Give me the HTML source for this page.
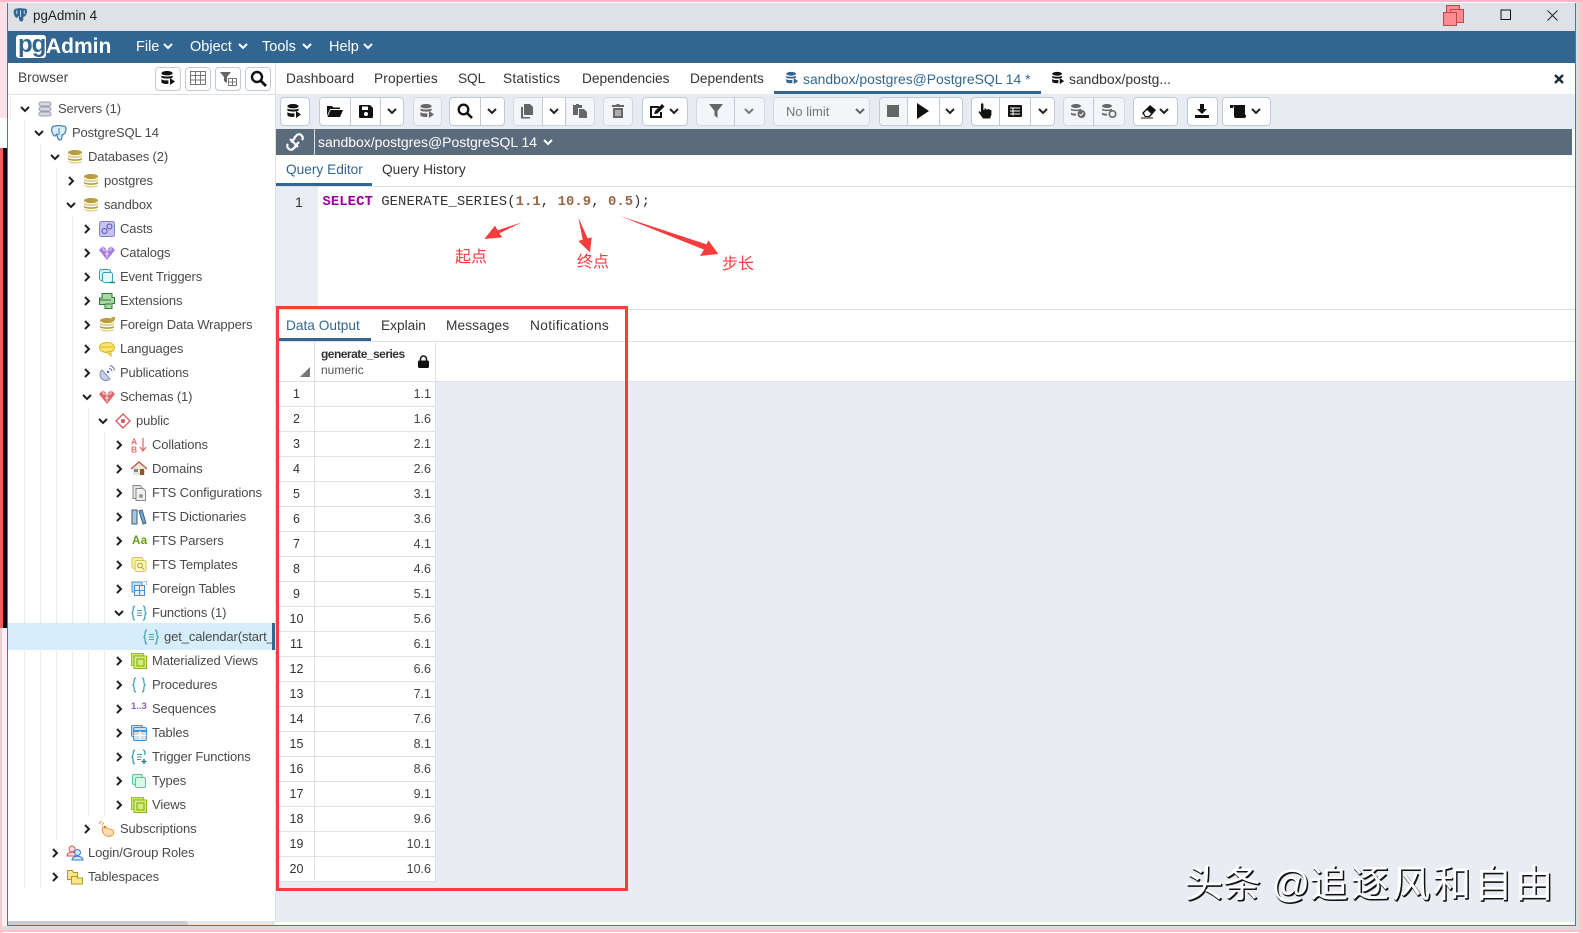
<!DOCTYPE html>
<html lang="en"><head><meta charset="utf-8"><title>pgAdmin 4</title>
<style>
html,body{margin:0;padding:0;width:1583px;height:933px;overflow:hidden;background:#fff;font-family:"Liberation Sans","Noto Sans CJK SC",sans-serif;color:#333}
div,span,svg{position:absolute;display:block}
use{display:inline}
.r{left:8px;width:264px;height:24px;line-height:24px;font-size:13px;letter-spacing:-.12px;color:#4a4a4a;white-space:nowrap}
.r span{top:0}
.r svg{top:4px;width:16px;height:16px}
.r svg.c{top:6px;width:12px;height:12px;color:#222}
.gl{width:1px;background:#e9ebef}
.tb{font-size:13.7px;color:#333;white-space:nowrap;line-height:18px}
.g{top:97px;height:27px;border:1px solid #c3c9d4;border-radius:4px;background:#fff;box-sizing:content-box}
.g.d{background:#f3f5f8;border-color:#d5d9e0}
.dv{top:97px;height:29px;width:1px;background:#c3c9d4}
.t{top:103px;width:16px;height:16px;color:#111}
.t.o{color:#666}
.ch{top:105px;width:12px;height:12px;color:#222}
.h{top:67px;width:24px;height:22px;border:1px solid #c3c9d4;border-radius:4px;background:#fff}
.n{left:279px;width:35px;height:24px;line-height:24px;text-align:center;font-size:12.5px;color:#333;background:#fff}
.v{left:315px;width:120px;height:24px;line-height:24px;text-align:right;font-size:12.5px;color:#444;background:#fff;box-sizing:border-box;padding-right:4px}
</style></head><body>
<svg width="0" height="0" style="position:absolute">
<symbol id="d" viewBox="0 0 12 12"><path d="M2 4l4 4 4-4" fill="none" stroke="currentColor" stroke-width="2"/></symbol>
<symbol id="rr" viewBox="0 0 12 12"><path d="M4 2l4 4-4 4" fill="none" stroke="currentColor" stroke-width="2"/></symbol>
<symbol id="db" viewBox="0 0 16 16"><ellipse cx="8" cy="3.5" rx="7" ry="2.6" fill="#b99d43"/><path d="M1 5.6c1 2 13 2 14 0v2c-1 2-13 2-14 0z" fill="#e3d38b"/><path d="M1 8.8c1 2 13 2 14 0v1.6c-1 2-13 2-14 0z" fill="#b99d43"/><path d="M1 11.6c1 2 13 2 14 0v1c-1 2.6-13 2.6-14 0z" fill="#e3d38b"/></symbol>
<symbol id="tdb" viewBox="0 0 16 16"><ellipse cx="7" cy="3.2" rx="5.6" ry="2.2" fill="currentColor"/><path d="M1.4 5.4c1 1.6 10.200 1.600 11.200 0v2c-1 1.600-10.200 1.600-11.200 0zM1.400 9c1 1.600 6 1.600 7 1.200v3.600c-3 .4-6 0-7-1.400z" fill="currentColor"/><path d="M10 8l5 3.500-5 3.500z" fill="currentColor"/></symbol>
<symbol id="srv" viewBox="0 0 16 16"><g fill="#d6d8e2" stroke="#9a9db0"><rect x="2" y="1" width="12" height="4" rx="2"/><rect x="2" y="6" width="12" height="4" rx="2"/><rect x="2" y="11" width="12" height="4" rx="2"/></g></symbol>
<symbol id="pg" viewBox="0 0 16 16"><path d="M4 1C1 1 0 4 1 7s2 4 3 4 1-2 2-2c0 3 1 6 3 6s2-2 2-5c2 0 4-3 4-6s-2-3-4-3C9 .5 6 .5 4 1z" fill="#d8ecf8" stroke="#3f7fb0" stroke-width="1.200"/><path d="M8 3v7" stroke="#3f7fb0"/></symbol>
</svg>

<!-- outer frame -->
<div style="left:0;top:0;width:1583px;height:2px;background:#fbb6c8"></div>
<div style="left:0;top:2px;width:7px;height:116px;background:#fde1e4"></div>
<div style="left:0;top:118px;width:7px;height:30px;background:#fff"></div>
<div style="left:0;top:148px;width:3px;height:480px;background:#fb5b5b"></div>
<div style="left:3px;top:148px;width:4px;height:480px;background:#0a0a0a"></div>
<div style="left:0;top:628px;width:2px;height:305px;background:#fcc8cc"></div>
<div style="left:2px;top:628px;width:5px;height:298px;background:#fdf0f0"></div>
<div style="left:1579px;top:2px;width:4px;height:931px;background:#fcc8cc"></div>
<div style="left:1576px;top:2px;width:3px;height:928px;background:#dcdcdc"></div>
<div style="left:2px;top:926px;width:1577px;height:4px;background:#dcdcdc"></div>
<div style="left:0;top:930px;width:1583px;height:2px;background:#fcc0c6"></div>
<div style="left:7px;top:3px;width:1px;height:923px;background:#2f7fc4"></div>
<div style="left:1575px;top:3px;width:1px;height:923px;background:#2f7fc4"></div>
<div style="left:7px;top:925px;width:1569px;height:1px;background:#2f7fc4"></div>

<!-- title bar -->
<div style="left:8px;top:3px;width:1567px;height:28px;background:#dee1e6"></div>
<svg style="left:13px;top:7px" width="15" height="16" viewBox="0 0 16 16"><path d="M4 1C1 1 0 4 1 7s2 4 3 4 1-2 2-2c0 3 1 6 3 6s2-2 2-5c2 0 4-3 4-6s-2-3-4-3C9 .5 6 .5 4 1z" fill="#336791"/><path d="M8 3v7M4 3v4M12 3v4" stroke="#cfe0ec"/></svg>
<div style="left:33px;top:7px;font-size:13.4px;line-height:18px;color:#222;white-space:nowrap">pgAdmin 4</div>
<svg style="left:1443px;top:5px" width="42" height="22" viewBox="0 0 42 22"><rect x="3.500" y=".5" width="13" height="13" fill="#ff8a8f" stroke="#b84a50"/><rect x="7.500" y="4.500" width="13" height="13" fill="#ff8a8f" stroke="#b84a50"/><rect x=".5" y="7.500" width="13" height="13" fill="#ff8a8f" stroke="#b84a50"/></svg>
<svg style="left:1500px;top:9px" width="12" height="12" viewBox="0 0 12 12"><rect x="1" y="1" width="9.500" height="9.500" fill="none" stroke="#111"/></svg>
<svg style="left:1547px;top:10px" width="11" height="11" viewBox="0 0 11 11"><path d="M.5.5l10 10M10.500.5l-10 10" stroke="#222"/></svg>

<!-- nav bar -->
<div style="left:8px;top:31px;width:1567px;height:32px;background:#326690"></div>
<div style="left:16px;top:35px;width:30px;height:23px;background:#fff;border-radius:3px"></div>
<div style="left:18px;top:32px;font-size:24px;font-weight:bold;line-height:26px;color:#326690;letter-spacing:-1px">pg</div>
<div style="left:46px;top:34px;font-size:21px;font-weight:bold;line-height:26px;color:#fff">Admin</div>
<div style="left:136px;top:38px;font-size:14.5px;line-height:18px;color:#fff">File</div>
<div style="left:190px;top:38px;font-size:14.5px;line-height:18px;color:#fff">Object</div>
<div style="left:262px;top:38px;font-size:14.500px;line-height:18px;color:#fff">Tools</div>
<div style="left:329px;top:38px;font-size:14.5px;line-height:18px;color:#fff">Help</div>
<svg style="left:162px;top:40px;color:#fff" width="12" height="12"><use href="#d"/></svg>
<svg style="left:237px;top:40px;color:#fff" width="12" height="12"><use href="#d"/></svg>
<svg style="left:301px;top:40px;color:#fff" width="12" height="12"><use href="#d"/></svg>
<svg style="left:362px;top:40px;color:#fff" width="12" height="12"><use href="#d"/></svg>

<!-- browser header -->
<div style="left:8px;top:94px;width:267px;height:1px;background:#dde0e6"></div>
<div style="left:275px;top:63px;width:1px;height:859px;background:#dde0e6"></div>
<div class="tb" style="left:18px;top:69px;color:#444">Browser</div>
<div class="h" style="left:155px"></div><div class="h" style="left:185px"></div><div class="h" style="left:215px"></div><div class="h" style="left:245px"></div>
<svg style="left:160px;top:70px;color:#111" width="16" height="16"><use href="#tdb"/></svg>
<svg style="left:190px;top:71px" width="16" height="14" viewBox="0 0 16 14"><path d="M.5.5h15v13H.5zM.5 4.500h15M.5 9h15M5.500.5v13M10.500.5v13" fill="none" stroke="#777"/></svg>
<svg style="left:220px;top:71px" width="17" height="15" viewBox="0 0 17 15"><path d="M0 1h11L7 6v6L4 10V6z" fill="#666"/><path d="M8.500 7.500h8v7h-8zM8.500 11h8M12.500 7.500v7" fill="none" stroke="#777"/></svg>
<svg style="left:250px;top:70px" width="17" height="17" viewBox="0 0 17 17"><circle cx="7" cy="7" r="5" fill="none" stroke="#111" stroke-width="2.400"/><path d="M11 11l5 5" stroke="#111" stroke-width="2.800"/></svg>

<!-- tree guides -->
<div class="gl" style="left:10px;top:96px;height:24px"></div>
<div class="gl" style="left:24px;top:120px;height:769px"></div>
<div class="gl" style="left:40px;top:144px;height:745px"></div>
<div class="gl" style="left:56px;top:168px;height:673px"></div>
<div class="gl" style="left:72px;top:217px;height:624px"></div>
<div class="gl" style="left:88px;top:409px;height:408px"></div>
<div class="gl" style="left:104px;top:433px;height:384px"></div>
<div style="left:8px;top:623px;width:264px;height:27px;background:#d6edfa"></div>
<div style="left:272px;top:623px;width:3px;height:27px;background:#326690"></div>

<!-- tree rows -->
<div class="r" style="top:97px"><svg class="c" style="left:11px"><use href="#d"/></svg><svg style="left:29px"><use href="#srv"/></svg><span style="left:50px">Servers (1)</span></div>
<div class="r" style="top:121px"><svg class="c" style="left:25px"><use href="#d"/></svg><svg style="left:43px"><use href="#pg"/></svg><span style="left:64px">PostgreSQL 14</span></div>
<div class="r" style="top:145px"><svg class="c" style="left:41px"><use href="#d"/></svg><svg style="left:59px"><use href="#db"/></svg><span style="left:80px">Databases (2)</span></div>
<div class="r" style="top:169px"><svg class="c" style="left:57px"><use href="#rr"/></svg><svg style="left:75px"><use href="#db"/></svg><span style="left:96px">postgres</span></div>
<div class="r" style="top:193px"><svg class="c" style="left:57px"><use href="#d"/></svg><svg style="left:75px"><use href="#db"/></svg><span style="left:96px">sandbox</span></div>
<div class="r" style="top:217px"><svg class="c" style="left:73px"><use href="#rr"/></svg><svg style="left:91px" viewBox="0 0 16 16"><rect x=".5" y=".5" width="15" height="15" rx="2" fill="#c5c3f0" stroke="#8480d0"/><circle cx="5.500" cy="10" r="2.500" fill="none" stroke="#5450b0"/><circle cx="10.500" cy="5.500" r="2.500" fill="none" stroke="#5450b0"/></svg><span style="left:112px">Casts</span></div>
<div class="r" style="top:241px"><svg class="c" style="left:73px"><use href="#rr"/></svg><svg style="left:91px" viewBox="0 0 16 16"><path d="M0 5l4-4 4 4 4-4 4 4-8 10z" fill="#a57bde"/><path d="M4 5h8M6 9h4M4 1v4M8 5v8M12 1v4" stroke="#e9dcfa"/></svg><span style="left:112px">Catalogs</span></div>
<div class="r" style="top:265px"><svg class="c" style="left:73px"><use href="#rr"/></svg><svg style="left:91px" viewBox="0 0 16 16"><rect x=".5" y=".5" width="11" height="11" rx="2" fill="#d8f2f6" stroke="#3c9db0"/><rect x="3.500" y="3.500" width="10" height="10" rx="2" fill="#e8f8fa" stroke="#3c9db0"/><path d="M11 13.500h5" stroke="#2a8090" stroke-width="1.500"/></svg><span style="left:112px">Event Triggers</span></div>
<div class="r" style="top:289px"><svg class="c" style="left:73px"><use href="#rr"/></svg><svg style="left:91px" viewBox="0 0 16 16"><path d="M3 .5h10v4h2.500v6H13v5H6v-4H.5V5H3z" fill="#a9d8a4" stroke="#2e7d32"/><path d="M1 7h11M6 11h6" stroke="#2e7d32"/></svg><span style="left:112px">Extensions</span></div>
<div class="r" style="top:313px"><svg class="c" style="left:73px"><use href="#rr"/></svg><svg style="left:91px" viewBox="0 0 16 16"><use href="#db"/><path d="M12 0h4v4l-1.200-1.500L12 5l-1-1 2.500-2.500z" fill="#b99d43"/></svg><span style="left:112px">Foreign Data Wrappers</span></div>
<div class="r" style="top:337px"><svg class="c" style="left:73px"><use href="#rr"/></svg><svg style="left:91px" viewBox="0 0 16 16"><ellipse cx="8" cy="6.500" rx="7.500" ry="5" fill="#ffe66d" stroke="#d4b820"/><path d="M2 6h12" stroke="#d4b820"/><path d="M8 11l4 4v-5z" fill="#ffe66d" stroke="#d4b820"/></svg><span style="left:112px">Languages</span></div>
<div class="r" style="top:361px"><svg class="c" style="left:73px"><use href="#rr"/></svg><svg style="left:91px" viewBox="0 0 16 16"><path d="M3 5a6 6 0 0 0 8 9z" fill="#c5d0e8" stroke="#7f90bd"/><circle cx="9" cy="7" r="1.200" fill="#4a5fa8"/><path d="M10 3.500a3 3 0 0 1 3 3M11 .5a6 6 0 0 1 4.500 5" fill="none" stroke="#5a6fb8"/></svg><span style="left:112px">Publications</span></div>
<div class="r" style="top:385px"><svg class="c" style="left:73px"><use href="#d"/></svg><svg style="left:91px" viewBox="0 0 16 16"><path d="M0 5l4-4 4 4 4-4 4 4-8 10z" fill="#d9676c"/><path d="M4 5h8M6 9h4M4 1v4M8 5v8M12 1v4" stroke="#fbe2e3"/></svg><span style="left:112px">Schemas (1)</span></div>
<div class="r" style="top:409px"><svg class="c" style="left:89px"><use href="#d"/></svg><svg style="left:107px" viewBox="0 0 16 16"><path d="M8 1l7 7-7 7-7-7z" fill="#fff" stroke="#d8555a" stroke-width="1.300"/><circle cx="8" cy="8" r="2" fill="#d8555a"/></svg><span style="left:128px">public</span></div>
<div class="r" style="top:433px"><svg class="c" style="left:105px"><use href="#rr"/></svg><svg style="left:123px" viewBox="0 0 16 16"><text x="0" y="7.500" font-size="8.500" font-weight="bold" fill="#ee6a6e" font-family="Liberation Sans">A</text><text x="0" y="15.500" font-size="8.500" font-weight="bold" fill="#ee6a6e" font-family="Liberation Sans">B</text><path d="M12 1v13M9 10l3 4 3-4" fill="none" stroke="#ee6a6e" stroke-width="1.300"/></svg><span style="left:144px">Collations</span></div>
<div class="r" style="top:457px"><svg class="c" style="left:105px"><use href="#rr"/></svg><svg style="left:123px" viewBox="0 0 16 16"><path d="M0 8l8-7 8 7" fill="none" stroke="#c85a50" stroke-width="1.500"/><path d="M2 7l6-5 6 5v7H2z" fill="#e8e4da"/><rect x="9" y="8" width="4" height="6" fill="#8b5a2b"/><rect x="3" y="8" width="4" height="3" fill="#888"/></svg><span style="left:144px">Domains</span></div>
<div class="r" style="top:481px"><svg class="c" style="left:105px"><use href="#rr"/></svg><svg style="left:123px" viewBox="0 0 16 16"><path d="M2 .5h7l2 2v11H2z" fill="#e6e6e6" stroke="#888"/><path d="M5 3.500h7l2.500 2.500v9.500H5z" fill="#f2f2f2" stroke="#888"/><circle cx="10" cy="11" r="2" fill="#999"/></svg><span style="left:144px">FTS Configurations</span></div>
<div class="r" style="top:505px"><svg class="c" style="left:105px"><use href="#rr"/></svg><svg style="left:123px" viewBox="0 0 16 16"><rect x="1" y="1" width="5" height="14" fill="#a5c8e4" stroke="#445a70"/><path d="M8 2l3-1 4 13-3 1z" fill="#6aaee0" stroke="#445a70"/></svg><span style="left:144px">FTS Dictionaries</span></div>
<div class="r" style="top:529px"><svg class="c" style="left:105px"><use href="#rr"/></svg><span style="left:124px;top:0;font-size:11.500px;font-weight:bold;color:#6a9a10;letter-spacing:.5px">Aa</span><span style="left:144px">FTS Parsers</span></div>
<div class="r" style="top:553px"><svg class="c" style="left:105px"><use href="#rr"/></svg><svg style="left:123px" viewBox="0 0 16 16"><rect x="1" y=".5" width="11" height="11" rx="2" fill="#fbf3a8" stroke="#d4c440"/><rect x="4" y="3.500" width="11" height="11" rx="2" fill="#fdf8c8" stroke="#d4c440"/><circle cx="9" cy="8.500" r="2.300" fill="none" stroke="#b09a20"/><path d="M11 10.500l2 2" stroke="#b09a20"/></svg><span style="left:144px">FTS Templates</span></div>
<div class="r" style="top:577px"><svg class="c" style="left:105px"><use href="#rr"/></svg><svg style="left:123px" viewBox="0 0 16 16"><rect x="1" y="1" width="10" height="10" fill="#bfe0fa" stroke="#3b94e0"/><rect x="3.500" y="4.500" width="10" height="10" fill="#eee" stroke="#3b94e0"/><path d="M3.500 9.500h10M8.500 4.500v10" stroke="#3b94e0"/><path d="M12 0h4v4" fill="none" stroke="#3b94e0"/></svg><span style="left:144px">Foreign Tables</span></div>
<div class="r" style="top:601px"><svg class="c" style="left:105px"><use href="#d"/></svg><svg style="left:123px" viewBox="0 0 16 16"><path d="M4 1C1 1 3 7 1 8c2 1 0 7 3 7M12 1c3 0 1 6 3 7-2 1 0 7-3 7" fill="none" stroke="#4aa4b8" stroke-width="1.300"/><path d="M6 5.500h5M6 8h5M6 10.500h5" stroke="#4aa4b8"/></svg><span style="left:144px">Functions (1)</span></div>
<div class="r" style="top:625px"><svg style="left:135px" viewBox="0 0 16 16"><path d="M4 1C1 1 3 7 1 8c2 1 0 7 3 7M12 1c3 0 1 6 3 7-2 1 0 7-3 7" fill="none" stroke="#4aa4b8" stroke-width="1.300"/><path d="M6 5.500h5M6 8h5M6 10.500h5" stroke="#4aa4b8"/></svg><span style="left:156px;width:108px;overflow:hidden">get_calendar(start_date</span></div>
<div class="r" style="top:649px"><svg class="c" style="left:105px"><use href="#rr"/></svg><svg style="left:123px" viewBox="0 0 16 16"><rect x=".5" y=".5" width="12" height="12" fill="#c6e85a" stroke="#9cc32a"/><rect x="3" y="3" width="12.500" height="12.500" fill="#d5f07a" stroke="#8cb320"/><rect x="6" y="6" width="7" height="7" fill="none" stroke="#7aa018"/></svg><span style="left:144px">Materialized Views</span></div>
<div class="r" style="top:673px"><svg class="c" style="left:105px"><use href="#rr"/></svg><svg style="left:123px" viewBox="0 0 16 16"><path d="M5 1C2 1 4 7 2 8c2 1 0 7 3 7M11 1c3 0 1 6 3 7-2 1 0 7-3 7" fill="none" stroke="#4aa4b8" stroke-width="1.300"/></svg><span style="left:144px">Procedures</span></div>
<div class="r" style="top:697px"><svg class="c" style="left:105px"><use href="#rr"/></svg><span style="left:123px;top:-2px;font-size:9.500px;font-weight:bold;color:#8a5fd0;letter-spacing:0">1..3</span><span style="left:144px">Sequences</span></div>
<div class="r" style="top:721px"><svg class="c" style="left:105px"><use href="#rr"/></svg><svg style="left:123px" viewBox="0 0 16 16"><rect x=".5" y=".5" width="11" height="11" rx="1.500" fill="#bfe0fa" stroke="#3b94e0"/><rect x="2.500" y="2.500" width="13" height="13" rx="1.500" fill="#ddd" stroke="#3b94e0"/><path d="M2.500 6h13" stroke="#3b94e0" stroke-width="2"/><path d="M9 6v9M2.500 10.500h13" stroke="#fff"/></svg><span style="left:144px">Tables</span></div>
<div class="r" style="top:745px"><svg class="c" style="left:105px"><use href="#rr"/></svg><svg style="left:123px" viewBox="0 0 16 16"><path d="M4 1C1 1 3 7 1 8c2 1 0 7 3 7M12 1c3 0 1 4 2.500 5" fill="none" stroke="#3c9db0" stroke-width="1.300"/><path d="M6 5.500h5M6 8h5M6 10.500h4" stroke="#3c9db0"/><path d="M13 10v5M10.500 12.500h5" stroke="#2a8090" stroke-width="1.500"/></svg><span style="left:144px">Trigger Functions</span></div>
<div class="r" style="top:769px"><svg class="c" style="left:105px"><use href="#rr"/></svg><svg style="left:123px" viewBox="0 0 16 16"><rect x="1.500" y="1.500" width="10" height="10" rx="1.500" fill="#c8f4dc" stroke="#58c89a"/><rect x="4.500" y="4.500" width="10" height="10" rx="1.500" fill="#d8f8e8" stroke="#58c89a"/></svg><span style="left:144px">Types</span></div>
<div class="r" style="top:793px"><svg class="c" style="left:105px"><use href="#rr"/></svg><svg style="left:123px" viewBox="0 0 16 16"><rect x=".5" y=".5" width="12" height="12" fill="#c6e85a" stroke="#9cc32a"/><rect x="3" y="3" width="12.500" height="12.500" fill="#d5f07a" stroke="#8cb320"/><rect x="6" y="6" width="7" height="7" fill="none" stroke="#7aa018"/></svg><span style="left:144px">Views</span></div>
<div class="r" style="top:817px"><svg class="c" style="left:73px"><use href="#rr"/></svg><svg style="left:91px" viewBox="0 0 16 16"><path d="M4 6a6.500 6.500 0 0 0 8 9c3-1 3-4 2-6z" fill="#ffd9b0" stroke="#f09a40"/><circle cx="6" cy="6" r="1.200" fill="#e07020"/><path d="M3 4a4 4 0 0 1 2-2M0 3a6 6 0 0 1 3-3" fill="none" stroke="#f09a40"/></svg><span style="left:112px">Subscriptions</span></div>
<div class="r" style="top:841px"><svg class="c" style="left:41px"><use href="#rr"/></svg><svg style="left:58px;width:18px" viewBox="0 0 18 16"><circle cx="6" cy="4" r="3" fill="#fbe0e0" stroke="#d8555a"/><path d="M1 11c0-5 10-5 10 0z" fill="#fbe0e0" stroke="#d8555a"/><circle cx="11.500" cy="7.500" r="3" fill="#cfe4fa" stroke="#3b7fd0"/><path d="M6 15c0-5 11-5 11 0z" fill="#cfe4fa" stroke="#3b7fd0"/></svg><span style="left:80px">Login/Group Roles</span></div>
<div class="r" style="top:865px"><svg class="c" style="left:41px"><use href="#rr"/></svg><svg style="left:59px" viewBox="0 0 16 16"><path d="M.5 1.500h5l1 2h4v7H.5z" fill="#f8e88a" stroke="#b89a20"/><path d="M4.500 7.500h5l1 1.500h5v6h-11z" fill="#f8e88a" stroke="#b89a20"/></svg><span style="left:80px">Tablespaces</span></div>

<!-- left scrollbar -->
<div style="left:8px;top:921px;width:267px;height:4px;background:#e6e7e9"></div>
<div style="left:8px;top:921px;width:180px;height:4px;background:#c9ccd2;border-radius:0 3px 0 0"></div>

<!-- main tabs -->
<div style="left:276px;top:94px;width:1299px;height:35px;background:#e8ecf2"></div>
<div class="tb" style="left:286px;top:69.500px;letter-spacing:.15px">Dashboard</div>
<div class="tb" style="left:374px;top:69.500px;letter-spacing:.15px">Properties</div>
<div class="tb" style="left:458px;top:69.500px;letter-spacing:-.1px">SQL</div>
<div class="tb" style="left:503px;top:69.500px;letter-spacing:.25px">Statistics</div>
<div class="tb" style="left:582px;top:69.500px">Dependencies</div>
<div class="tb" style="left:690px;top:69.500px">Dependents</div>
<svg style="left:785px;top:71px;color:#326690" width="14" height="14"><use href="#tdb"/></svg>
<div class="tb" style="left:803px;top:69.500px;color:#326690;font-size:13.900px">sandbox/postgres@PostgreSQL 14 *</div>
<div style="left:774px;top:91px;width:267px;height:3px;background:#326690"></div>
<svg style="left:1051px;top:71px;color:#111" width="14" height="14"><use href="#tdb"/></svg>
<div class="tb" style="left:1069px;top:69.500px;font-size:13.900px">sandbox/postg...</div>
<svg style="left:1553px;top:73px" width="12" height="12" viewBox="0 0 12 12"><path d="M2 2l8 8M10 2l-8 8" stroke="#1c2b3a" stroke-width="2.400"/></svg>

<!-- toolbar groups -->
<div class="g" style="left:280px;width:28px"></div>
<div class="g" style="left:319px;width:83px"></div><div class="dv" style="left:350px"></div><div class="dv" style="left:380px"></div>
<div class="g d" style="left:413px;width:27px"></div>
<div class="g" style="left:449px;width:54px"></div><div class="dv" style="left:480px"></div>
<div class="g d" style="left:513px;width:80px"></div><div class="dv" style="left:542px"></div><div class="dv" style="left:565px"></div>
<div style="left:543px;top:98px;width:22px;height:27px;background:#fff"></div>
<div class="g d" style="left:603px;width:28px"></div>
<div class="g" style="left:642px;width:44px"></div>
<div class="g d" style="left:696px;width:67px"></div><div class="dv" style="left:734px"></div>
<div class="g d" style="left:773px;width:95px"></div>
<div class="g" style="left:879px;width:82px"></div><div class="dv" style="left:907px"></div><div class="dv" style="left:939px"></div>
<div style="left:880px;top:98px;width:27px;height:27px;background:#f3f5f8;border-radius:3px 0 0 3px"></div>
<div class="g" style="left:971px;width:82px"></div><div class="dv" style="left:999px"></div><div class="dv" style="left:1030px"></div>
<div class="g d" style="left:1063px;width:60px"></div><div class="dv" style="left:1093px"></div>
<div class="g" style="left:1133px;width:43px"></div>
<div class="g" style="left:1187px;width:29px"></div>
<div class="g" style="left:1222px;width:47px"></div>

<!-- toolbar icons -->
<svg class="t" style="left:286px"><use href="#tdb"/></svg>
<svg class="t" style="left:326px;width:17px" viewBox="0 0 17 16"><path d="M1 3h5l1.500 1.500H14V6H4L1 13z" fill="#111"/><path d="M4.500 7H17l-3 7H1.500z" fill="#111"/></svg>
<svg class="t" style="left:358px" viewBox="0 0 16 16"><path d="M2 2h10l3 3v9a1 1 0 0 1-1 1H2a1 1 0 0 1-1-1V3a1 1 0 0 1 1-1z" fill="#111"/><rect x="4" y="3.500" width="6" height="3.500" fill="#fff"/><circle cx="8" cy="11" r="2" fill="#fff"/></svg>
<svg class="ch" style="left:386px"><use href="#d"/></svg>
<svg class="t o" style="left:419px"><use href="#tdb"/></svg>
<svg class="t" style="left:457px" viewBox="0 0 16 16"><circle cx="6.500" cy="6.500" r="4.800" fill="none" stroke="#111" stroke-width="2.300"/><path d="M10 10l5 5" stroke="#111" stroke-width="2.600"/></svg>
<svg class="ch" style="left:486px"><use href="#d"/></svg>
<svg class="t o" style="left:519px" viewBox="0 0 16 16"><path d="M5 1h6l3 3v8H5z" fill="#666"/><path d="M2 4h2v10h7v1.500H2z" fill="#666"/></svg>
<svg class="ch" style="left:548px"><use href="#d"/></svg>
<svg class="t o" style="left:572px" viewBox="0 0 16 16"><path d="M1 2h3V1h3v1h3v3H6v7H1z" fill="#666"/><path d="M7 6h5l3 3v6H7z" fill="#666"/></svg>
<svg class="t o" style="left:610px" viewBox="0 0 16 16"><path d="M2 2h4l1-1h2l1 1h4v2H2zM3 5h10v10H3z" fill="#666"/><path d="M6 7v6M8 7v6M10 7v6" stroke="#f3f5f8"/></svg>
<svg class="t" style="left:649px" viewBox="0 0 16 16"><path d="M1 3h9v2H3v8h8V9h2v6H1z" fill="#111"/><path d="M6 8l7-7 2.500 2.500-7 7L5 11z" fill="#111"/></svg>
<svg class="ch" style="left:668px"><use href="#d"/></svg>
<svg class="t o" style="left:708px" viewBox="0 0 16 16"><path d="M1 1h14l-5.500 7v7l-3-2.500V8z" fill="#666"/></svg>
<svg class="ch" style="left:743px;color:#777"><use href="#d"/></svg>
<div style="left:786px;top:103px;font-size:13px;line-height:18px;color:#777;white-space:nowrap">No limit</div>
<svg class="ch" style="left:854px;color:#666"><use href="#d"/></svg>
<div style="left:887px;top:105px;width:12px;height:12px;background:#666"></div>
<svg class="t" style="left:915px;top:103px" viewBox="0 0 16 16"><path d="M2 0l12 8-12 8z" fill="#111"/></svg>
<svg class="ch" style="left:944px"><use href="#d"/></svg>
<svg class="t" style="left:977px" viewBox="0 0 16 16"><path d="M4 1.500a1.200 1.200 0 0 1 2.400 0V7h1V5.500h2V7h1V6h2v1h1V7h1v5l-1.500 3.500H6L1.500 9l1-1L4 9.500z" fill="#111"/></svg>
<svg class="t" style="left:1007px" viewBox="0 0 16 16"><rect x="1" y="2" width="14" height="12" rx="1" fill="#111"/><path d="M3 5h10M3 8h10M3 11h10" stroke="#fff"/><path d="M6 4.500v8" stroke="#fff"/></svg>
<svg class="ch" style="left:1037px"><use href="#d"/></svg>
<svg class="t o" style="left:1070px"  viewBox="0 0 16 16"><ellipse cx="6" cy="3" rx="5" ry="2" fill="#666"/><path d="M1 5.500c1 1.500 9 1.500 10 0V7c-1 1.500-9 1.500-10 0zM1 9.500c1 1.200 4 1.300 5 1v2c-1 .3-4 0-5-1z" fill="#666"/><circle cx="11.500" cy="11" r="4" fill="#666"/><path d="M9.500 11l1.500 1.500 2.500-3" fill="none" stroke="#fff"/></svg>
<svg class="t o" style="left:1101px" viewBox="0 0 16 16"><ellipse cx="6" cy="3" rx="5" ry="2" fill="#666"/><path d="M1 5.500c1 1.500 9 1.500 10 0V7c-1 1.500-9 1.500-10 0zM1 9.500c1 1.200 4 1.300 5 1v2c-1 .3-4 0-5-1z" fill="#666"/><circle cx="11.500" cy="11" r="3.200" fill="none" stroke="#666" stroke-width="1.600"/></svg>
<svg class="t" style="left:1141px" viewBox="0 0 16 16"><path d="M1 10l8-8 6 5-6 7H4z" fill="#111"/><path d="M3 10l3-3 4 3.500L8 13H4.500z" fill="#fff"/><path d="M0 15h12" stroke="#111"/></svg>
<svg class="ch" style="left:1158px"><use href="#d"/></svg>
<svg class="t" style="left:1194px" viewBox="0 0 16 16"><path d="M6 1h4v5h3l-5 5-5-5h3z" fill="#111"/><rect x="1" y="12" width="14" height="3" fill="#111"/></svg>
<svg class="t" style="left:1230px" viewBox="0 0 16 16"><path d="M0 2h3v3H0zM3 2h12v10h1v1a2 2 0 0 1-2 2H6a2 2 0 0 1-2-2V5z" fill="#111"/></svg>
<svg class="ch" style="left:1250px"><use href="#d"/></svg>

<!-- connection bar -->
<div style="left:276px;top:129px;width:1296px;height:26px;background:#5b6b7c"></div>
<div style="left:314px;top:129px;width:1px;height:26px;background:#dde0e6"></div>
<svg style="left:286px;top:133px" width="18" height="18" viewBox="0 0 18 18"><g fill="none" stroke="#fff" stroke-width="2.200"><path d="M2 11a3 3 0 0 0 0 4l1 1a3 3 0 0 0 4 0l3-3"/><path d="M16 7a3 3 0 0 0 0-4l-1-1a3 3 0 0 0-4 0L8 5"/><path d="M5 9l4-4M9 13l4-4M4 6l8 8"/></g></svg>
<div style="left:318px;top:133px;font-size:13.950px;line-height:18px;color:#fff;white-space:nowrap">sandbox/postgres@PostgreSQL 14</div>
<svg style="left:542px;top:136px;color:#fff" width="12" height="12"><use href="#d"/></svg>

<!-- query tabs -->
<div class="tb" style="left:286px;top:161px;color:#326690">Query Editor</div>
<div class="tb" style="left:382px;top:161px">Query History</div>
<div style="left:276px;top:186px;width:1299px;height:1px;background:#dde0e6"></div>
<div style="left:276px;top:183px;width:96px;height:3px;background:#326690"></div>

<!-- editor -->
<div style="left:276px;top:187px;width:42px;height:122px;background:#eaedf2"></div>
<div style="left:295px;top:193px;font-size:14px;line-height:18px;color:#333">1</div>
<div style="left:322.500px;top:193px;font-family:'Liberation Mono',monospace;font-size:13.900px;letter-spacing:.06px;line-height:18px;color:#333;white-space:pre"><b style="color:#909">SELECT</b> GENERATE_SERIES(<b style="color:#964;font-weight:bold">1.1</b>, <b style="color:#964">10.9</b>, <b style="color:#964">0.5</b>);</div>
<svg style="left:445px;top:205px" width="320" height="80" viewBox="0 0 960 240"><g fill="#f63c3c"><path d="M230 52L163 85 172 97 118 102 150 62 158 76z"/><path d="M400 38L428 100 440 97 435 142 400 108 413 104z"/><path d="M525 33L785 118 790 106 820 147 765 153 777 134z"/></g></svg>
<div style="left:455px;top:245px;font-size:16px;line-height:21px;color:#f63c3c;font-family:'Noto Sans CJK SC',sans-serif">起点</div>
<div style="left:577px;top:250px;font-size:16px;line-height:21px;color:#f63c3c;font-family:'Noto Sans CJK SC',sans-serif">终点</div>
<div style="left:722px;top:252px;font-size:16px;line-height:21px;color:#f63c3c;font-family:'Noto Sans CJK SC',sans-serif">步长</div>

<!-- data output -->
<div style="left:276px;top:309px;width:1299px;height:613px;background:#e9ecf2"></div>
<div style="left:276px;top:309px;width:1299px;height:32px;background:#fff;border-top:1px solid #dde0e6;box-sizing:border-box"></div>
<div style="left:276px;top:341px;width:1299px;height:41px;background:#fff;border-top:1px solid #dde0e6;border-bottom:1px solid #dde0e6;box-sizing:border-box"></div>
<div class="tb" style="left:286px;top:317px;color:#326690">Data Output</div>
<div class="tb" style="left:381px;top:317px">Explain</div>
<div class="tb" style="left:446px;top:317px;letter-spacing:.1px">Messages</div>
<div class="tb" style="left:530px;top:317px;letter-spacing:.35px">Notifications</div>
<div style="left:279px;top:338px;width:92px;height:3px;background:#326690"></div>
<div style="left:314px;top:342px;width:1px;height:39px;background:#dde0e6"></div>
<div style="left:435px;top:342px;width:1px;height:39px;background:#dde0e6"></div>
<div style="left:321px;top:346px;font-size:12px;font-weight:bold;line-height:16px;color:#333;letter-spacing:-.52px;white-space:nowrap">generate_series</div>
<div style="left:321px;top:362px;font-size:12px;line-height:16px;color:#555">numeric</div>
<svg style="left:418px;top:355px" width="11" height="13" viewBox="0 0 11 13"><path d="M2.500 6V4a3 3 0 0 1 6 0v2" fill="none" stroke="#111" stroke-width="1.500"/><rect x="0" y="5.500" width="11" height="7.500" rx="1.500" fill="#111"/></svg>
<svg style="left:300px;top:367px" width="10" height="10" viewBox="0 0 10 10"><path d="M10 0v10H0z" fill="#777"/></svg>

<!-- grid -->
<div style="left:278px;top:381px;width:158px;height:501px;background:#dde0e8"></div>
<div class="n" style="top:382px">1</div><div class="v" style="top:382px">1.1</div>
<div class="n" style="top:407px">2</div><div class="v" style="top:407px">1.6</div>
<div class="n" style="top:432px">3</div><div class="v" style="top:432px">2.1</div>
<div class="n" style="top:457px">4</div><div class="v" style="top:457px">2.6</div>
<div class="n" style="top:482px">5</div><div class="v" style="top:482px">3.1</div>
<div class="n" style="top:507px">6</div><div class="v" style="top:507px">3.6</div>
<div class="n" style="top:532px">7</div><div class="v" style="top:532px">4.1</div>
<div class="n" style="top:557px">8</div><div class="v" style="top:557px">4.6</div>
<div class="n" style="top:582px">9</div><div class="v" style="top:582px">5.1</div>
<div class="n" style="top:607px">10</div><div class="v" style="top:607px">5.6</div>
<div class="n" style="top:632px">11</div><div class="v" style="top:632px">6.1</div>
<div class="n" style="top:657px">12</div><div class="v" style="top:657px">6.6</div>
<div class="n" style="top:682px">13</div><div class="v" style="top:682px">7.1</div>
<div class="n" style="top:707px">14</div><div class="v" style="top:707px">7.6</div>
<div class="n" style="top:732px">15</div><div class="v" style="top:732px">8.1</div>
<div class="n" style="top:757px">16</div><div class="v" style="top:757px">8.6</div>
<div class="n" style="top:782px">17</div><div class="v" style="top:782px">9.1</div>
<div class="n" style="top:807px">18</div><div class="v" style="top:807px">9.6</div>
<div class="n" style="top:832px">19</div><div class="v" style="top:832px">10.1</div>
<div class="n" style="top:857px">20</div><div class="v" style="top:857px">10.6</div>

<!-- red annotation box -->
<div style="left:276px;top:306px;width:352px;height:585px;border:3px solid #f63c3c;box-sizing:border-box"></div>

<!-- watermark -->
<div style="left:1185px;top:862px;font-size:38px;line-height:46px;color:#fff;text-shadow:1.5px 1.5px 0 #111,.5px 1.5px 0 #111;white-space:nowrap;font-family:'Liberation Sans','Noto Sans CJK SC',sans-serif">头条 @<i style="font-style:normal;letter-spacing:3px">追逐风和自由</i></div>
</body></html>
